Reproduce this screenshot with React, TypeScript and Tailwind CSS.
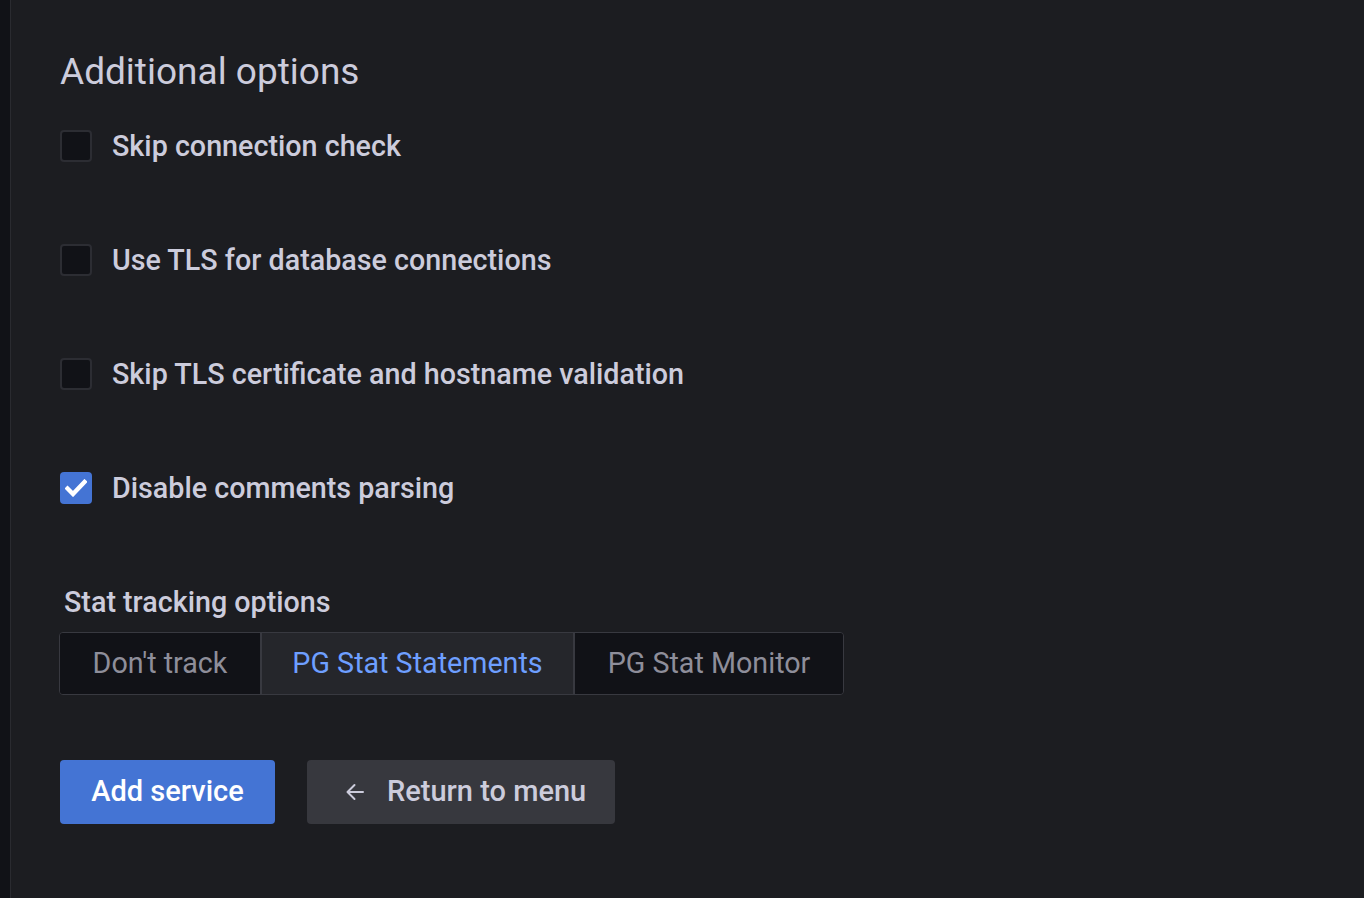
import * as React from "react"

const options = [
  { label: "Skip connection check", checked: false },
  { label: "Use TLS for database connections", checked: false },
  { label: "Skip TLS certificate and hostname validation", checked: false },
  { label: "Disable comments parsing", checked: true },
]

const tracking = [
  { label: "Don't track", width: "w-[200px]" },
  { label: "PG Stat Statements", width: "w-[315px]" },
  { label: "PG Stat Monitor", width: "w-[268px]" },
]

function Checkbox({ checked }: { checked: boolean }) {
  if (checked) {
    return (
      <div className="flex size-[32px] shrink-0 items-center justify-center rounded-[4px] bg-[#4474d4]">
        <svg width="22" height="18" viewBox="0 0 22 18">
          <path d="M2.5 9.5 L8 15 L19.5 3" fill="none" stroke="#fff" strokeWidth="4.4" strokeLinecap="square" />
        </svg>
      </div>
    )
  }
  return <div className="size-[32px] shrink-0 rounded-[4px] border-2 border-[#2c2d33] bg-[#111217]" />
}

export default function App() {
  const [active, setActive] = React.useState(1)

  return (
    <div className="flex h-[898px] w-full bg-[#1c1d21] font-['Roboto',sans-serif] text-[#ccccdc]">
      <div className="w-[11px] shrink-0 border-r border-[#2a2b30] bg-[#111217]" />
      <div className="flex flex-1 flex-col pl-[49px] pt-[50px]">
        <h2 className="text-[37px] leading-[44px] font-normal text-[#ccccdc]">Additional options</h2>

        <div className="mt-[36px] flex flex-col gap-[82px]">
          {options.map((o) => (
            <label key={o.label} className="flex h-[32px] cursor-pointer items-center gap-[20px]">
              <Checkbox checked={o.checked} />
              <span className="text-[28.7px] font-medium leading-[32px]">{o.label}</span>
            </label>
          ))}
        </div>

        <div className="mt-[82px] pl-[4px] text-[28.7px] font-medium leading-[32px]">Stat tracking options</div>

        <div className="mt-[14px] -ml-[1px] flex h-[63px] w-fit overflow-hidden rounded-[4px] border border-[#383940]">
          {tracking.map((t, i) => (
            <button
              key={t.label}
              onClick={() => setActive(i)}
              className={
                i === active
                  ? `flex ${t.width} items-center justify-center border-x-2 border-[#383940] bg-[#25262b] text-[28.7px] text-[#6e9fff]`
                  : `flex ${t.width} items-center justify-center bg-[#111217] text-[28.7px] text-[#8e8e9a]`
              }
            >
              {t.label}
            </button>
          ))}
        </div>

        <div className="mt-[65px] flex gap-[32px]">
          <button className="flex h-[64px] w-[215px] items-center justify-center rounded-[4px] bg-[#4474d4] text-[29px] font-medium text-white">
            Add service
          </button>
          <button className="flex h-[64px] w-[308px] items-center gap-[22px] rounded-[4px] bg-[#37383e] pl-[38px] text-[29px] font-medium text-[#ccccdc]">
            <svg width="20" height="20" viewBox="0 0 20 20">
              <path d="M18 10 H3 M9.5 3 L2.5 10 L9.5 17" fill="none" stroke="currentColor" strokeWidth="2" strokeLinecap="round" strokeLinejoin="round" />
            </svg>
            Return to menu
          </button>
        </div>
      </div>
    </div>
  )
}
